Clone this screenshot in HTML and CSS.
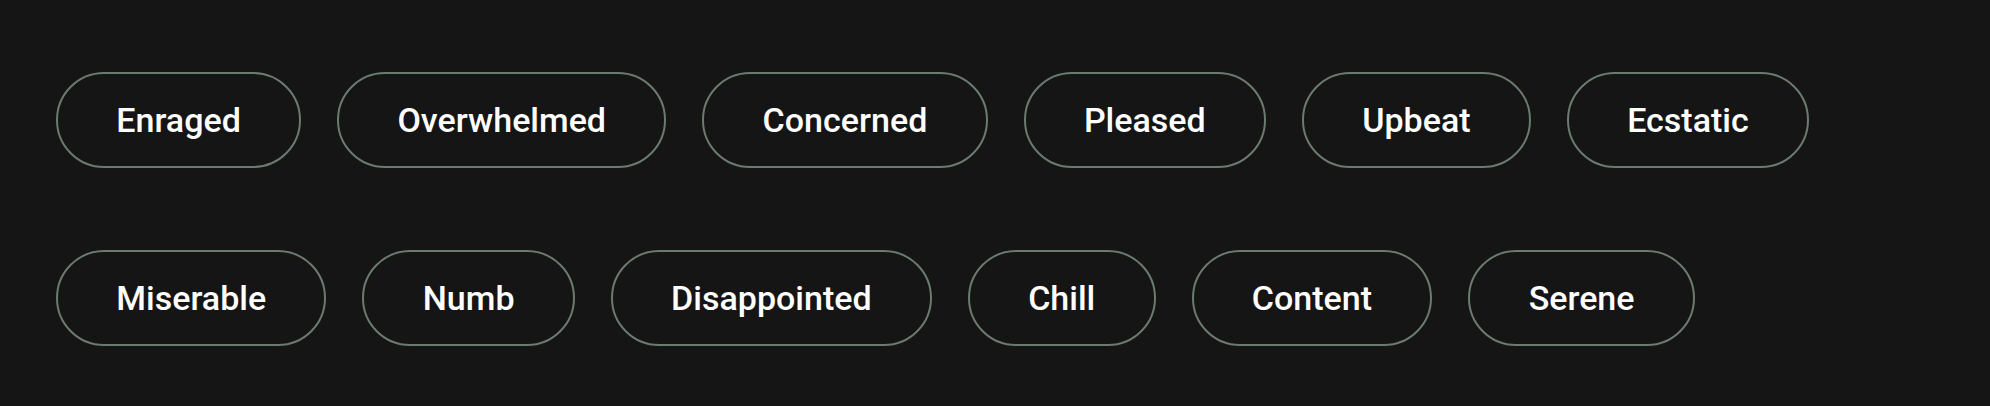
FILE: index.html
```html
<!DOCTYPE html>
<html lang="en">
<head>
<meta charset="utf-8">
<title>Moods</title>
<link rel="stylesheet" href="styles.css">
</head>
<body>
<div class="chips">
  <div class="row">
    <span class="chip">Enraged</span>
    <span class="chip">Overwhelmed</span>
    <span class="chip">Concerned</span>
    <span class="chip">Pleased</span>
    <span class="chip">Upbeat</span>
    <span class="chip">Ecstatic</span>
  </div>
  <div class="row">
    <span class="chip">Miserable</span>
    <span class="chip">Numb</span>
    <span class="chip">Disappointed</span>
    <span class="chip">Chill</span>
    <span class="chip">Content</span>
    <span class="chip">Serene</span>
  </div>
</div>
</body>
</html>
```
FILE: styles.css
```css
html, body {
  margin: 0;
  padding: 0;
  background: #151515;
}
body {
  width: 1990px;
  height: 406px;
  font-family: Roboto, "Liberation Sans", sans-serif;
}
.chips {
  display: flex;
  flex-direction: column;
  gap: 82px;
  padding: 72px 56px;
}
.row {
  display: flex;
  gap: 36px;
}
.chip {
  box-sizing: border-box;
  height: 96px;
  display: flex;
  align-items: center;
  padding: 0 58.3px;
  border: 2px solid #6c7a6f;
  border-radius: 48px;
  color: #ffffff;
  font-size: 34px;
  font-weight: 500;
  white-space: nowrap;
}
```
